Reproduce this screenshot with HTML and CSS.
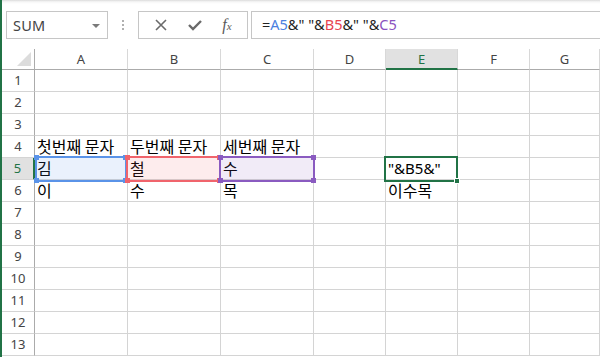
FILE: index.html
```html
<!DOCTYPE html>
<html>
<head>
<meta charset="utf-8">
<link rel="stylesheet" href="styles.css">
</head>
<body>
<div class="app">
  <div class="toolbar">
    <div class="namebox">
      <span class="nb-text">SUM</span>
      <span class="nb-arrow"></span>
    </div>
    <div class="grip"><i></i><i></i><i></i></div>
    <div class="btns">
      <svg class="ico" width="14" height="14" viewBox="0 0 14 14"><path d="M2 2 L12 12 M12 2 L2 12" stroke="#6a6a6a" stroke-width="1.6" fill="none"/></svg>
      <svg class="ico" width="16" height="14" viewBox="0 0 16 14"><path d="M2 7 L6 11 L14 3" stroke="#6a6a6a" stroke-width="2.4" fill="none"/></svg>
      <span class="fx">f<small>x</small></span>
    </div>
    <div class="formula">=<span class="r-blue">A5</span>&amp;" "&amp;<span class="r-red">B5</span>&amp;" "&amp;<span class="r-purple">C5</span></div>
  </div>
  <div class="grid">
    <div class="corner"><span class="tri"></span></div>
    <div class="ch">A</div><div class="ch">B</div><div class="ch">C</div><div class="ch">D</div><div class="ch ch-sel">E</div><div class="ch">F</div><div class="ch">G</div>

    <div class="rh">1</div><div class="c"></div><div class="c"></div><div class="c"></div><div class="c"></div><div class="c"></div><div class="c"></div><div class="c"></div>
    <div class="rh">2</div><div class="c"></div><div class="c"></div><div class="c"></div><div class="c"></div><div class="c"></div><div class="c"></div><div class="c"></div>
    <div class="rh">3</div><div class="c"></div><div class="c"></div><div class="c"></div><div class="c"></div><div class="c"></div><div class="c"></div><div class="c"></div>
    <div class="rh">4</div><div class="c ko">첫번째 문자</div><div class="c ko">두번째 문자</div><div class="c ko">세번째 문자</div><div class="c"></div><div class="c"></div><div class="c"></div><div class="c"></div>
    <div class="rh rh-sel">5</div><div class="c ko">김</div><div class="c ko">철</div><div class="c ko">수</div><div class="c"></div><div class="c">"&amp;B5&amp;"</div><div class="c"></div><div class="c"></div>
    <div class="rh">6</div><div class="c ko">이</div><div class="c ko">수</div><div class="c ko">목</div><div class="c"></div><div class="c ko">이수목</div><div class="c"></div><div class="c"></div>
    <div class="rh">7</div><div class="c"></div><div class="c"></div><div class="c"></div><div class="c"></div><div class="c"></div><div class="c"></div><div class="c"></div>
    <div class="rh">8</div><div class="c"></div><div class="c"></div><div class="c"></div><div class="c"></div><div class="c"></div><div class="c"></div><div class="c"></div>
    <div class="rh">9</div><div class="c"></div><div class="c"></div><div class="c"></div><div class="c"></div><div class="c"></div><div class="c"></div><div class="c"></div>
    <div class="rh">10</div><div class="c"></div><div class="c"></div><div class="c"></div><div class="c"></div><div class="c"></div><div class="c"></div><div class="c"></div>
    <div class="rh">11</div><div class="c"></div><div class="c"></div><div class="c"></div><div class="c"></div><div class="c"></div><div class="c"></div><div class="c"></div>
    <div class="rh">12</div><div class="c"></div><div class="c"></div><div class="c"></div><div class="c"></div><div class="c"></div><div class="c"></div><div class="c"></div>
    <div class="rh">13</div><div class="c"></div><div class="c"></div><div class="c"></div><div class="c"></div><div class="c"></div><div class="c"></div><div class="c"></div>

    <div class="hl hl-blue"><i class="k tl"></i><i class="k bl"></i><i class="k tr"></i><i class="k br"></i></div>
    <div class="hl hl-red"><i class="k tl"></i><i class="k bl"></i><i class="k tr"></i><i class="k br"></i></div>
    <div class="hl hl-purple"><i class="k tl"></i><i class="k bl"></i><i class="k tr"></i><i class="k br"></i></div>
    <div class="sel"><i class="handle"></i></div>
  </div>
</div>
</body>
</html>
```
FILE: styles.css
```css
* { box-sizing: border-box; }
html, body { margin: 0; padding: 0; background: #fff; }
body { font-family: "Noto Sans", "Noto Sans CJK KR", sans-serif; }

.app {
  width: 600px;
  height: 357px;
  overflow: hidden;
  border-left: 2px solid #217346;
  background: #fff;
}

.toolbar {
  height: 49px;
  display: flex;
  align-items: flex-start;
  padding-top: 11px;
  background: linear-gradient(to bottom, #d9d9d9 0px, #ececec 1px, #f7f7f7 2px, #fff 4px);
}

.namebox {
  margin-left: 4px;
  width: 102px;
  height: 28px;
  border: 1px solid #c6c6c6;
  background: #fff;
  display: flex;
  align-items: center;
  justify-content: space-between;
  padding: 0 7px 0 6px;
}
.nb-text { font-size: 14.5px; color: #444; letter-spacing: 0.2px; }
.nb-arrow {
  width: 0; height: 0;
  border-left: 4px solid transparent;
  border-right: 4px solid transparent;
  border-top: 4px solid #7a7a7a;
  margin-top: 1px;
}

.grip {
  width: 30px;
  height: 28px;
  display: flex;
  flex-direction: column;
  align-items: center;
  justify-content: center;
  gap: 2px;
}
.grip i { width: 2px; height: 2px; background: #b0b0b0; display: block; }

.btns {
  width: 110px;
  height: 28px;
  border: 1px solid #c6c6c6;
  display: flex;
  align-items: center;
  justify-content: space-around;
  padding: 0 6px 0 6px;
}
.ico { display: block; }
.fx {
  font-family: "Liberation Serif", serif;
  font-style: italic;
  font-size: 16px;
  color: #5a5a5a;
  line-height: 1;
}
.fx small { font-size: 11px; }

.formula {
  margin-left: 3px;
  flex: 1;
  height: 28px;
  border: 1px solid #c6c6c6;
  border-right: none;
  font-size: 14.5px;
  color: #222;
  padding-left: 10px;
  line-height: 25px;
  white-space: pre;
}
.r-blue { color: #4a7fe0; }
.r-red { color: #e8434f; }
.r-purple { color: #8a52c0; }

.grid {
  position: relative;
  display: grid;
  grid-template-columns: 33px 93px 93px 93px 72px 72px 72px 1fr;
  grid-template-rows: 21px repeat(13, 22px);
}

.corner {
  position: relative;
  border-right: 1px solid #ababab;
  border-bottom: 1px solid #ababab;
}
.tri {
  position: absolute;
  right: 3px;
  bottom: 3px;
  width: 0; height: 0;
  border-left: 14px solid transparent;
  border-bottom: 14px solid #dcdcdc;
}

.ch {
  border-right: 1px solid #d8d8d8;
  border-bottom: 1px solid #ababab;
  font-size: 13px;
  color: #444;
  text-align: center;
  line-height: 20px;
}
.ch-sel {
  background: #e1e1e1;
  border-bottom: 2px solid #217346;
  color: #217346;
}

.rh {
  border-right: 1px solid #ababab;
  border-bottom: 1px solid #d4d4d4;
  font-size: 13px;
  color: #444;
  text-align: center;
  line-height: 21px;
}
.rh-sel {
  background: #e1e1e1;
  border-right: 2px solid #217346;
  color: #217346;
}

.c {
  border-right: 1px solid #d4d4d4;
  border-bottom: 1px solid #d4d4d4;
  font-family: "Noto Sans", "Noto Sans CJK KR", sans-serif;
  font-size: 15px;
  color: #000;
  padding-left: 2px;
  line-height: 21px;
  white-space: nowrap;
  overflow: visible;
  display: flex;
  align-items: flex-end;
}
.ko {
  font-family: "Noto Sans CJK KR", sans-serif;
  font-size: 16px;
  line-height: 21px;
}

.hl {
  position: absolute;
  top: 107px;
  height: 26px;
  border: 2px solid;
}
.hl-blue { left: 33px; width: 92px; border-color: #5a93e8; background: rgba(90, 147, 232, 0.13); }
.hl-red { left: 124px; width: 95px; border-color: #f0646c; background: rgba(240, 100, 108, 0.12); }
.hl-purple { left: 217px; width: 96px; border-color: #8a5bc0; background: rgba(138, 91, 192, 0.12); }
.hl-blue .k { background: #5a93e8; }
.hl-red .k { background: #f0646c; }
.hl-purple .k { background: #8a5bc0; }

.k {
  position: absolute;
  width: 5px;
  height: 5px;
  display: block;
}
.k.tl { left: -3px; top: -3px; }
.k.bl { left: -3px; bottom: -3px; }
.k.tr { right: -3px; top: -3px; }
.k.br { right: -3px; bottom: -3px; }

.sel {
  position: absolute;
  left: 382px;
  top: 107px;
  width: 74px;
  height: 26px;
  border: 2px solid #217346;
}
.handle {
  position: absolute;
  right: -4px;
  bottom: -4px;
  width: 6px;
  height: 6px;
  background: #217346;
  border: 1px solid #fff;
  display: block;
}
```
